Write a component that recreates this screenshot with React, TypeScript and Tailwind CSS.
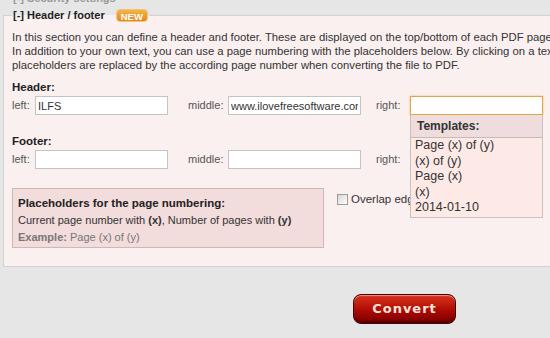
import React from 'react';

const TEMPLATES = ['Page (x) of (y)', '(x) of (y)', 'Page (x)', '(x)', '2014-01-10'];

function Field({ value, focused, children }: { value?: string; focused?: boolean; children?: React.ReactNode }) {
  return (
    <div className="relative w-[133px] h-[19px]">
      <input
        readOnly
        value={value ?? ''}
        className={`w-full h-full bg-white px-[2px] text-[11px] text-[#333] outline-none border ${
          focused ? 'border-[#e2a54a] shadow-[0_0_2px_#f0c070]' : 'border-[#c4c4c4]'
        }`}
      />
      {children}
    </div>
  );
}

function Row({ left, middle, focusRight, children }: { left?: string; middle?: string; focusRight?: boolean; children?: React.ReactNode }) {
  return (
    <div className="flex items-center h-[19px] text-[11px] text-[#555]">
      <span className="w-[23px]">left:</span>
      <Field value={left} />
      <span className="ml-[20px] w-[40px]">middle:</span>
      <Field value={middle} />
      <span className="ml-[15px] w-[34px]">right:</span>
      <Field focused={focusRight}>{children}</Field>
    </div>
  );
}

export default function App() {
  return (
    <div className="w-[550px] h-[338px] overflow-hidden bg-[#e6e6e6] font-['Liberation_Sans',Arial,sans-serif] text-[#333]">
      {/* collapsed section above, cut off */}
      <div className="h-[5px] overflow-hidden">
        <div className="-mt-[9px] pl-[13px] leading-[14px] text-[11px] font-bold text-[#9a9a9a]">[-] Security settings</div>
      </div>

      <fieldset className="ml-[3px] w-[640px] border border-[#d2d2d2] bg-[#faf0f0] pl-[8px] pb-[18px]">
        <legend className="ml-0 px-[1px] h-[20px] flex items-center text-[11px] font-bold text-[#222]">
          [-] Header / footer
          <span className="ml-[11px] px-[4px] h-[13px] leading-[13px] rounded-[4px] bg-gradient-to-b from-[#f6b347] to-[#e08a12] border border-[#f3c27a] text-[9.5px] font-bold text-white">
            NEW
          </span>
        </legend>

        <p className="mt-[5px] text-[11.3px] leading-[14px] text-[#333] whitespace-nowrap">
          In this section you can define a header and footer. These are displayed on the top/bottom of each PDF page.
          <br />
          In addition to your own text, you can use a page numbering with the placeholders below. By clicking on a text field, the
          <br />
          placeholders are replaced by the according page number when converting the file to PDF.
        </p>

        <div className="mt-[8px] h-[14px] leading-[14px] text-[11.5px] font-bold text-[#222]">Header:</div>
        <div className="mt-[2px]">
          <Row left="ILFS" middle="www.ilovefreesoftware.com" focusRight>
            <div className="absolute left-0 top-full z-10 w-[133px] h-[103px] bg-[#fde9e6] border border-[#c9c0c0] border-t-0">
              <div className="h-[23px] flex items-center pl-[6px] bg-[#efdcdc] border-b border-[#c8b8b8] text-[12px] font-bold text-[#333]">
                Templates:
              </div>
              <ul className="pl-[4px] text-[12.5px] leading-[15.5px] text-[#333]">
                {TEMPLATES.map(t => (
                  <li key={t}>{t}</li>
                ))}
              </ul>
            </div>
          </Row>
        </div>

        <div className="mt-[19px] h-[14px] leading-[14px] text-[11.5px] font-bold text-[#222]">Footer:</div>
        <div className="mt-[2px]">
          <Row />
        </div>

        <div className="mt-[19px] flex items-start">
          <div className="w-[312px] h-[60px] bg-[#f2dcdc] border border-[#c9b9b9] px-[5px] pt-[6px] text-[11px] leading-[17px]">
            <div className="font-bold text-[11.5px] text-[#222]">Placeholders for the page numbering:</div>
            <div>
              Current page number with <b>(x)</b>, Number of pages with <b>(y)</b>
            </div>
            <div className="text-[#777]">
              <b>Example:</b> Page (x) of (y)
            </div>
          </div>
          <label className="ml-[13px] mt-[3px] flex items-center text-[11.5px] text-[#333]">
            <span className="w-[11px] h-[11px] border border-[#9c9c9c] bg-gradient-to-br from-[#d6d6d6] to-white" />
            <span className="ml-[3px]">Overlap edges</span>
          </label>
        </div>
      </fieldset>

      <div className="ml-[353px] mt-[27px]">
        <button className="w-[103px] h-[30px] rounded-[8px] border border-[#4a0000] bg-gradient-to-b from-[#d8301c] via-[#b40c04] to-[#7a0000] shadow-[inset_0_1px_1px_rgba(255,190,170,0.7),inset_0_-2px_2px_rgba(40,0,0,0.5)] font-['DejaVu_Sans',sans-serif] text-[13px] font-bold tracking-[1px] text-[#f7e4dc]">
          Convert
        </button>
      </div>
    </div>
  );
}
